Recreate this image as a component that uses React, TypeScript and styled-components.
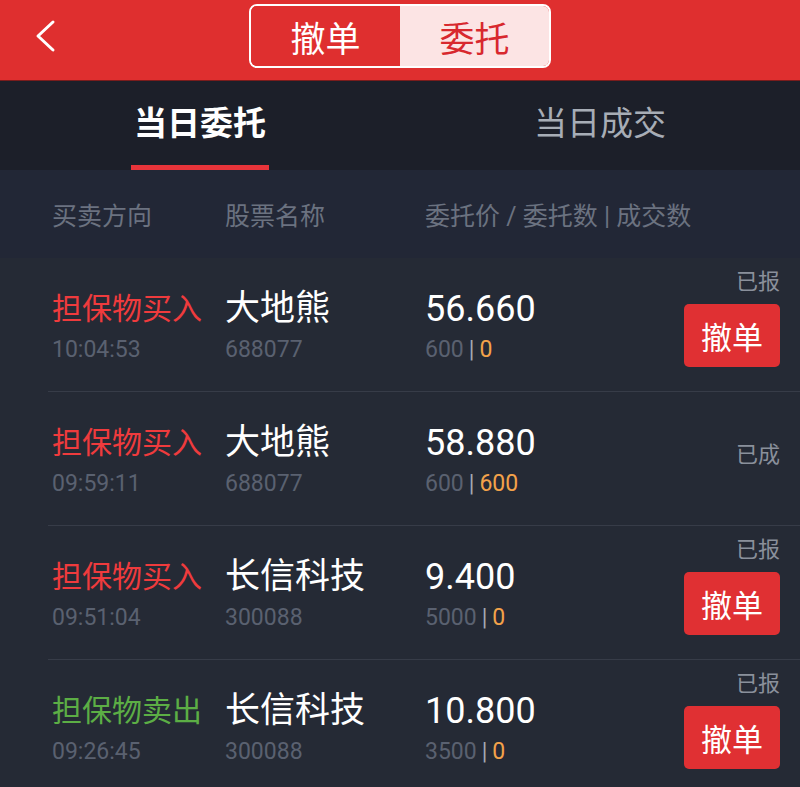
import styled, { createGlobalStyle } from 'styled-components';

const GlobalStyle = createGlobalStyle`
  html, body {
    margin: 0;
    padding: 0;
    background: #252a35;
    overflow: hidden;
  }
  body {
    font-family: Roboto, "Noto Sans CJK SC", sans-serif;
    -webkit-font-smoothing: antialiased;
  }
`;

type Order = {
  side: 'buy' | 'sell';
  time: string;
  name: string;
  code: string;
  price: string;
  qty: string;
  filled: string;
  status: string;
  cancellable: boolean;
};

const orders: Order[] = [
  { side: 'buy', time: '10:04:53', name: '大地熊', code: '688077', price: '56.660', qty: '600', filled: '0', status: '已报', cancellable: true },
  { side: 'buy', time: '09:59:11', name: '大地熊', code: '688077', price: '58.880', qty: '600', filled: '600', status: '已成', cancellable: false },
  { side: 'buy', time: '09:51:04', name: '长信科技', code: '300088', price: '9.400', qty: '5000', filled: '0', status: '已报', cancellable: true },
  { side: 'sell', time: '09:26:45', name: '长信科技', code: '300088', price: '10.800', qty: '3500', filled: '0', status: '已报', cancellable: true },
];

const Page = styled.div`
  width: 800px;
  height: 787px;
  overflow: hidden;
  background: #252a35;
`;

const Header = styled.header`
  height: 81px;
  box-sizing: border-box;
  padding-top: 4px;
  background: #df2f2f;
  display: grid;
  grid-template-columns: 1fr auto 1fr;
  align-items: start;
  border-bottom: 1px solid #7a1c1c;
`;

const BackButton = styled.button`
  justify-self: start;
  margin: 15px 0 0 34px;
  background: none;
  border: none;
  padding: 0;
  width: 22px;
  height: 34px;
  display: flex;
  align-items: center;
  cursor: pointer;
`;

const Segment = styled.div`
  display: flex;
  width: 302px;
  height: 64px;
  box-sizing: border-box;
  border: 2px solid #ffffff;
  border-radius: 8px;
  overflow: hidden;
`;

const SegmentItem = styled.div<{ $active?: boolean }>`
  flex: 1;
  display: flex;
  align-items: center;
  justify-content: center;
  font-size: 35px;
  background: ${(p) => (p.$active ? '#df2f2f' : '#fce4e4')};
  color: ${(p) => (p.$active ? '#ffffff' : '#d8282e')};
`;

const TabBar = styled.nav`
  height: 89px;
  display: flex;
  background: #1c1f29;
`;

const Tab = styled.div<{ $active?: boolean }>`
  flex: 1;
  display: flex;
  flex-direction: column;
  align-items: center;
  justify-content: flex-end;
  color: ${(p) => (p.$active ? '#ffffff' : '#a7adb6')};
  font-size: 33px;
  font-weight: ${(p) => (p.$active ? 700 : 400)};
  &::after {
    content: '';
    display: block;
    width: 138px;
    height: 5px;
    margin-top: 19px;
    background: ${(p) => (p.$active ? '#e8343a' : 'transparent')};
  }
`;

const TabLabel = styled.span`
  line-height: 44px;
`;

const ColumnHeader = styled.div`
  height: 88px;
  box-sizing: border-box;
  padding-left: 52px;
  display: grid;
  grid-template-columns: 173px 200px 1fr;
  align-items: center;
  background: #222736;
  color: #6b7280;
  font-size: 25px;
`;

const List = styled.div`
  background: #252a35;
`;

const Row = styled.div`
  margin-left: 48px;
  padding: 0 20px 0 4px;
  height: 134px;
  box-sizing: border-box;
  display: grid;
  grid-template-columns: 173px 200px 1fr auto;
  border-bottom: 1px solid #373c48;
`;

const Cell = styled.div`
  padding-top: 31px;
  display: flex;
  flex-direction: column;
`;

const MainLine = styled.div<{ $size: number; $color: string }>`
  height: 40px;
  line-height: 40px;
  font-size: ${(p) => p.$size}px;
  color: ${(p) => p.$color};
  white-space: nowrap;
`;

const SubLine = styled.div`
  margin-top: 6px;
  height: 30px;
  line-height: 30px;
  font-size: 23px;
  color: #5a6170;
  white-space: nowrap;
`;

const Divider = styled.span`
  color: #a3a9b3;
  margin: 0 5px;
`;

const Filled = styled.span`
  color: #f3a24a;
`;

const StatusCell = styled.div<{ $centered?: boolean }>`
  display: flex;
  flex-direction: column;
  align-items: flex-end;
  justify-content: ${(p) => (p.$centered ? 'center' : 'flex-start')};
  padding-top: ${(p) => (p.$centered ? 0 : 10)}px;
  padding-bottom: ${(p) => (p.$centered ? 8 : 0)}px;
`;

const Status = styled.span`
  font-size: 22px;
  line-height: 28px;
  color: #8a909b;
`;

const CancelButton = styled.button`
  margin-top: 8px;
  width: 96px;
  height: 63px;
  border: none;
  border-radius: 5px;
  background: #e03033;
  color: #ffffff;
  font-family: "Noto Sans CJK SC", sans-serif;
  font-size: 31px;
  padding: 0;
  cursor: pointer;
`;

const sideLabel = { buy: '担保物买入', sell: '担保物卖出' };
const sideColor = { buy: '#ef3b3d', sell: '#5cae45' };

export default function App() {
  return (
    <Page>
      <GlobalStyle />
      <Header>
        <BackButton aria-label="返回">
          <svg width="22" height="34" viewBox="0 0 22 34">
            <polyline points="19,3 4,17 19,31" fill="none" stroke="#ffffff" strokeWidth="3" strokeLinecap="round" strokeLinejoin="round" />
          </svg>
        </BackButton>
        <Segment>
          <SegmentItem $active>撤单</SegmentItem>
          <SegmentItem>委托</SegmentItem>
        </Segment>
      </Header>
      <TabBar>
        <Tab $active>
          <TabLabel>当日委托</TabLabel>
        </Tab>
        <Tab>
          <TabLabel>当日成交</TabLabel>
        </Tab>
      </TabBar>
      <ColumnHeader>
        <span>买卖方向</span>
        <span>股票名称</span>
        <span>委托价 / 委托数 | 成交数</span>
      </ColumnHeader>
      <List>
        {orders.map((o, i) => (
          <Row key={i}>
            <Cell>
              <MainLine $size={30} $color={sideColor[o.side]}>{sideLabel[o.side]}</MainLine>
              <SubLine>{o.time}</SubLine>
            </Cell>
            <Cell>
              <MainLine $size={35} $color="#ffffff">{o.name}</MainLine>
              <SubLine>{o.code}</SubLine>
            </Cell>
            <Cell>
              <MainLine $size={36} $color="#ffffff">{o.price}</MainLine>
              <SubLine>
                {o.qty}
                <Divider>|</Divider>
                <Filled>{o.filled}</Filled>
              </SubLine>
            </Cell>
            <StatusCell $centered={!o.cancellable}>
              <Status>{o.status}</Status>
              {o.cancellable && <CancelButton>撤单</CancelButton>}
            </StatusCell>
          </Row>
        ))}
      </List>
    </Page>
  );
}
